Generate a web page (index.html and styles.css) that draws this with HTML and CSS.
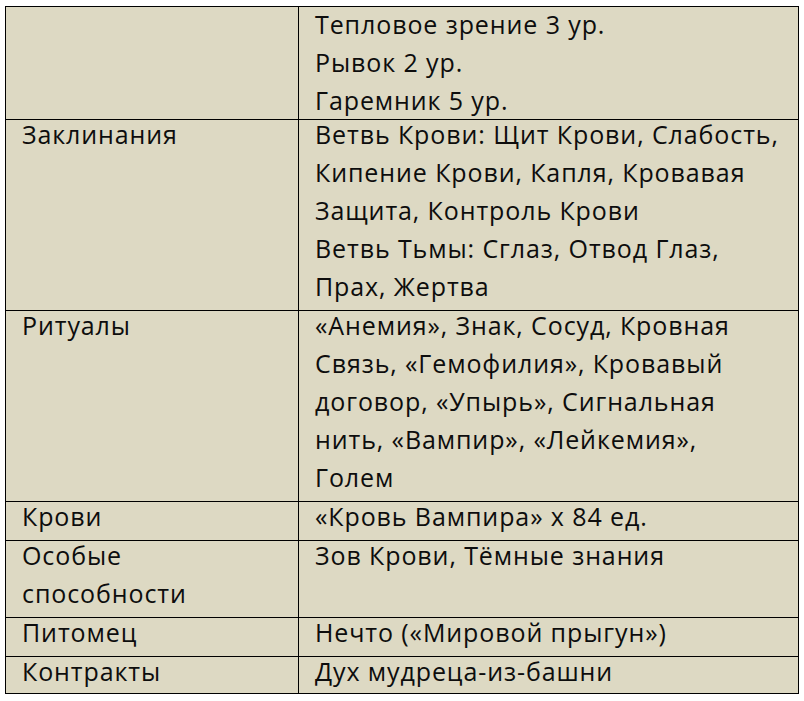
FILE: index.html
```html
<!DOCTYPE html>
<html lang="ru">
<head>
<meta charset="utf-8">
<title>Таблица</title>
<link rel="stylesheet" href="styles.css">
</head>
<body>
<table class="sheet">
  <colgroup><col class="c-label"><col class="c-value"></colgroup>
  <tr class="row-first">
    <td><div class="txt"></div></td>
    <td><div class="txt">Тепловое зрение 3 ур.<br>Рывок 2 ур.<br>Гаремник 5 ур.</div></td>
  </tr>
  <tr>
    <td><div class="txt">Заклинания</div></td>
    <td><div class="txt">Ветвь Крови: Щит Крови, Слабость,<br>Кипение Крови, Капля, Кровавая<br>Защита, Контроль Крови<br>Ветвь Тьмы: Сглаз, Отвод Глаз,<br>Прах, Жертва</div></td>
  </tr>
  <tr>
    <td><div class="txt">Ритуалы</div></td>
    <td><div class="txt">«Анемия», Знак, Сосуд, Кровная<br>Связь, «Гемофилия», Кровавый<br>договор, «Упырь», Сигнальная<br>нить, «Вампир», «Лейкемия»,<br>Голем</div></td>
  </tr>
  <tr>
    <td><div class="txt">Крови</div></td>
    <td><div class="txt">«Кровь Вампира» x 84 ед.</div></td>
  </tr>
  <tr>
    <td><div class="txt">Особые<br>способности</div></td>
    <td><div class="txt">Зов Крови, Тёмные знания</div></td>
  </tr>
  <tr>
    <td><div class="txt">Питомец</div></td>
    <td><div class="txt">Нечто («Мировой прыгун»)</div></td>
  </tr>
  <tr class="row-last">
    <td><div class="txt">Контракты</div></td>
    <td><div class="txt">Дух мудреца-из-башни</div></td>
  </tr>
</table>
</body>
</html>
```
FILE: styles.css
```css
html, body {
  margin: 0;
  padding: 0;
  background: #ffffff;
}
body {
  padding: 6px 0 0 5px;
  font-family: "Open Sans", "Liberation Sans", sans-serif;
  font-size: 25px;
  letter-spacing: 0.9px;
  color: #0d0d0d;
}
.sheet {
  border-collapse: collapse;
  width: 793px;
  table-layout: fixed;
  background: #ddd9c3;
}
.c-label { width: 293px; }
.c-value { width: 500px; }
.sheet td {
  border: 1px solid #000;
  padding: 0 0 0 16px;
  vertical-align: top;
  line-height: 38px;
  white-space: nowrap;
}
.txt {
  margin: -5px 0 5px;
}
.row-first .txt {
  margin: -2px 0 0;
  min-height: 114px;
}
.row-last .txt {
  margin: -5px 0 3px;
}
```
